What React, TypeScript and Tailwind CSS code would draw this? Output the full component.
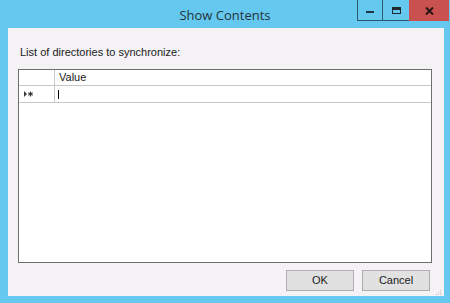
import React from "react";

function RowIndicator() {
  return (
    <svg width="10" height="6" viewBox="0 0 10 6" className="block">
      <path d="M0 0 L3 3 L0 6 Z" fill="#3a3a3a" />
      <path d="M6.5 0.5 V5.5 M4.3 1.7 L8.7 4.3 M4.3 4.3 L8.7 1.7" stroke="#3a3a3a" strokeWidth="1.1" />
    </svg>
  );
}

export default function App() {
  return (
    <div className="w-[450px] h-[303px] bg-[#64c8ef] flex flex-col font-['Liberation_Sans',sans-serif] overflow-hidden">
      {/* Title bar */}
      <div className="h-[28px] flex shrink-0">
        <div className="w-[93px] shrink-0" />
        <div className="flex-1 text-center font-['Open_Sans',sans-serif] text-[13px] leading-[28px] text-[#26343d] pt-[1px]">
          Show Contents
        </div>
        <div className="flex items-start shrink-0 mr-[1px]">
          <div className="w-[25px] h-[21px] border-l border-b border-[#2e5a70] flex items-center justify-center">
            <div className="w-[8px] h-[2px] bg-[#1f3340] mt-[4px]" />
          </div>
          <div className="w-[27px] h-[21px] border-l border-b border-[#2e5a70] flex items-center justify-center">
            <div className="w-[9px] h-[7px] border border-t-[3px] border-[#1f2a30]" />
          </div>
          <div className="w-[40px] h-[21px] bg-[#c9514f] flex items-center justify-center">
            <svg width="9" height="8" viewBox="0 0 9 8">
              <path d="M1 0.5 L8 7.5 M8 0.5 L1 7.5" stroke="#2a1515" strokeWidth="2" />
            </svg>
          </div>
        </div>
      </div>

      {/* Client area */}
      <div className="flex-1 ml-[8px] mr-[6px] mb-[8px] bg-[#f5f2f5] flex flex-col">
        <div className="pl-[12px] pt-[18px] text-[11px] leading-[12px] text-[#1a1a1a]">
          List of directories to synchronize:
        </div>

        {/* Data grid */}
        <div className="ml-[10px] mt-[11px] w-[414px] h-[194px] border border-[#6e6e6e] bg-white flex flex-col">
          <div className="h-[16px] flex border-b border-[#c8c8c8] shrink-0">
            <div className="w-[36px] border-r border-[#c8c8c8]" />
            <div className="flex-1 pl-[4px] text-[11px] leading-[15px] text-[#1a1a1a]">Value</div>
          </div>
          <div className="h-[17px] flex border-b border-[#c8c8c8] shrink-0">
            <div className="w-[36px] border-r border-[#c8c8c8] flex items-center pl-[5px]">
              <RowIndicator />
            </div>
            <div className="flex-1 flex items-center pl-[3px]">
              <div className="w-[1px] h-[9px] bg-black" />
            </div>
          </div>
          <div className="flex-1" />
        </div>

        {/* Buttons */}
        <div className="flex justify-end gap-[8px] mt-[7px] pr-[14px]">
          <div className="w-[68px] h-[21px] bg-[#e1e1e1] border border-[#adadad] flex items-center justify-center text-[11px] text-[#1a1a1a]">
            OK
          </div>
          <div className="w-[68px] h-[21px] bg-[#e1e1e1] border border-[#adadad] flex items-center justify-center text-[11px] text-[#1a1a1a]">
            Cancel
          </div>
        </div>
        <div className="flex justify-end pr-[2px] mt-[-1px]">
          <svg width="6" height="6" viewBox="0 0 6 6">
            <rect x="4" y="0" width="1" height="1" fill="#c0bcc0" />
            <rect x="2" y="2" width="1" height="1" fill="#c0bcc0" />
            <rect x="4" y="2" width="1" height="1" fill="#c0bcc0" />
            <rect x="0" y="4" width="1" height="1" fill="#c0bcc0" />
            <rect x="2" y="4" width="1" height="1" fill="#c0bcc0" />
            <rect x="4" y="4" width="1" height="1" fill="#c0bcc0" />
          </svg>
        </div>
      </div>
    </div>
  );
}
